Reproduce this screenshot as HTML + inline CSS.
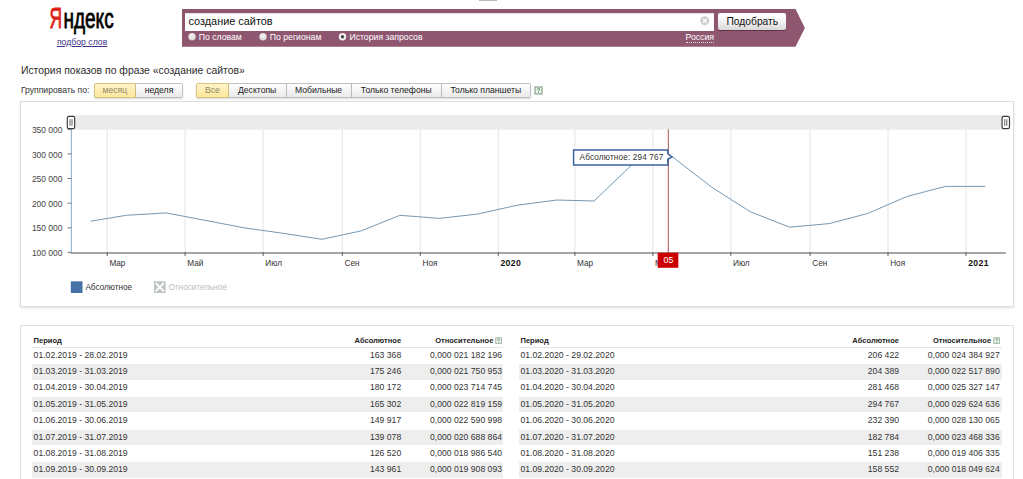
<!DOCTYPE html>
<html lang="ru"><head><meta charset="utf-8"><title>Яндекс — подбор слов</title>
<style>
html,body{margin:0;padding:0;background:#fff;}
body{width:1023px;height:479px;overflow:hidden;position:relative;font-family:"Liberation Sans",sans-serif;color:#222;}
.abs{position:absolute;white-space:nowrap;line-height:1;}
.ax{font-family:"Liberation Sans",sans-serif;font-size:8.2px;fill:#333;}
.ay{font-size:8.45px;fill:#444;}
.ax.b{font-weight:bold;fill:#111;font-size:8.7px;letter-spacing:0.35px;}
.axw{font-family:"Liberation Sans",sans-serif;}
.th{font-size:7.55px;font-weight:bold;color:#222;}
.td{font-size:8.65px;color:#333;}
.r{text-align:right;}
.box{border:1px solid #dedede;box-sizing:border-box;background:#fff;}
.help{width:6px;height:6px;border:1px solid #7fae84;box-sizing:border-box;background:#eef6ee;}
.help i{position:absolute;left:0;top:-0.4px;width:100%;text-align:center;font-style:normal;font-size:5px;line-height:5px;color:#3c8a46;font-weight:bold;}
.btn{position:absolute;box-sizing:border-box;top:83.1px;height:14.7px;border:1px solid #c2c2c2;border-left:none;background:linear-gradient(#ffffff,#e9e9e9);font-size:8.65px;line-height:13.2px;text-align:center;color:#222;white-space:nowrap;box-shadow:0 1px 1.5px rgba(0,0,0,.16);}
.btn.first{border-left:1px solid #c2c2c2;border-radius:2px 0 0 2px;}
.btn.last{border-radius:0 2px 2px 0;}
.btn.on{background:linear-gradient(#fff4c8,#fce79c);border-color:#d8c383;color:#8f8a66;}
.rl{font-size:8.7px;color:#fff;top:33.2px;}
</style></head><body>
<!-- top tiny bar -->
<div class="abs" style="left:479.3px;top:0;width:17.6px;height:1.2px;background:#b3bcbc"></div>

<!-- logo -->
<svg class="abs" id="logo" style="left:40px;top:0" width="90" height="40" viewBox="0 0 90 40"><g font-family="Liberation Sans, sans-serif" stroke-linejoin="round"><text transform="translate(9.6,27.7) scale(0.59,1)" font-size="29.6" fill="#df1f1a" stroke="#df1f1a" stroke-width="0.9">Я</text><text transform="translate(23.4,27.7) scale(0.69,1)" font-size="27.6" fill="#000" stroke="#000" stroke-width="0.8">ндекс</text></g></svg>
<div class="abs" id="sub" style="left:56.9px;top:38.2px;font-size:8.7px;color:#40308a;text-decoration:underline">подбор слов</div>

<!-- search arrow -->
<svg class="abs" style="left:182px;top:9px" width="624" height="39" viewBox="0 0 624 39"><path d="M0 0.1 H613.5 L622.9 18.9 L613.5 37.8 H0 Z" fill="#8f566f"/></svg>
<div class="abs" style="left:184.8px;top:12.6px;width:529px;height:18px;background:#fff;box-shadow:inset 0 1px 1px rgba(0,0,0,.12)"></div>
<div class="abs" id="q" style="left:188.5px;top:16.1px;font-size:10.9px;color:#111">создание сайтов</div>
<svg class="abs" style="left:699.7px;top:16.3px" width="10" height="10" viewBox="0 0 10 10"><circle cx="4.8" cy="4.8" r="4.5" fill="#cfcfcf"/><path d="M3 3 L6.6 6.6 M6.6 3 L3 6.6" stroke="#fff" stroke-width="1.3"/></svg>
<div class="abs" id="go" style="left:718.1px;top:13.2px;width:68.4px;height:17px;box-sizing:border-box;border:none;border-radius:2px;background:linear-gradient(#ffffff 20%,#d9d9d9);box-shadow:0 1px 0.5px rgba(40,10,25,.45);font-size:10.25px;line-height:17.6px;text-align:center;color:#111">Подобрать</div>

<div class="abs rl" id="r1" style="left:198.7px">По словам</div>
<div class="abs rl" id="r2" style="left:269.8px">По регионам</div>
<svg class="abs" style="left:182px;top:30px" width="200" height="14" viewBox="182 30 200 14"><defs><radialGradient id="rg" cx="50%" cy="40%" r="60%"><stop offset="0" stop-color="#f6f6f6"/><stop offset="1" stop-color="#d6d2d4"/></radialGradient></defs><circle cx="192" cy="36.8" r="3.75" fill="url(#rg)"/><circle cx="263" cy="36.8" r="3.75" fill="url(#rg)"/><circle cx="342.5" cy="36.7" r="3.75" fill="#f2eef0"/><circle cx="342.5" cy="36.7" r="1.7" fill="#4a4a4a"/></svg>
<div class="abs rl" id="r3" style="left:349.4px">История запросов</div>
<div class="abs rl" id="ru" style="left:685.5px;top:32.6px;border-bottom:1px dotted #e8d9e0;padding-bottom:1.2px">Россия</div>

<!-- title -->
<div class="abs" id="title" style="left:20.9px;top:66px;font-size:10.43px;color:#2e2e2e">История показов по фразе «создание сайтов»</div>
<div class="abs" id="grp" style="left:20.9px;top:85.6px;font-size:8.6px;color:#333">Группировать по:</div>

<div class="btn first on" id="b1" style="left:93.6px;width:42.4px">месяц</div>
<div class="btn last" id="b2" style="left:136px;width:47px">неделя</div>

<div class="btn first on" id="b3" style="left:196.3px;width:32.4px">Все</div>
<div class="btn" id="b4" style="left:228.7px;width:57.9px">Десктопы</div>
<div class="btn" id="b5" style="left:286.6px;width:65px">Мобильные</div>
<div class="btn" id="b6" style="left:351.6px;width:90.3px">Только телефоны</div>
<div class="btn last" id="b7" style="left:441.9px;width:88.8px">Только планшеты</div>
<svg class="abs" style="left:533.6px;top:85.6px" width="9" height="9" viewBox="0 0 9 9"><rect x="1" y="1" width="7" height="7" fill="#e9f5ea" stroke="#8fa392" stroke-width="1.2"/><path d="M3.3 3.6 Q3.3 2.5 4.5 2.5 Q5.7 2.5 5.7 3.5 Q5.7 4.2 4.5 4.8 V5.4 M4.5 6.2 V6.9" stroke="#4d8055" stroke-width="0.9" fill="none"/></svg>

<!-- chart box -->
<div class="abs box" style="left:20.1px;top:100.8px;width:993.8px;height:206.6px;box-shadow:0 1px 2.5px rgba(0,0,0,.12)"></div>
<svg class="abs" style="left:0;top:0" width="1023" height="479" viewBox="0 0 1023 479">
<rect x="71" y="115.2" width="935" height="14.5" fill="#ebebeb"/>
<line x1="107.2" y1="129.3" x2="107.2" y2="252.4" stroke="#dddde1" stroke-width="0.8"/>
<line x1="185.1" y1="129.3" x2="185.1" y2="252.4" stroke="#dddde1" stroke-width="0.8"/>
<line x1="263.1" y1="129.3" x2="263.1" y2="252.4" stroke="#dddde1" stroke-width="0.8"/>
<line x1="342.3" y1="129.3" x2="342.3" y2="252.4" stroke="#dddde1" stroke-width="0.8"/>
<line x1="420.3" y1="129.3" x2="420.3" y2="252.4" stroke="#dddde1" stroke-width="0.8"/>
<line x1="498.2" y1="129.3" x2="498.2" y2="252.4" stroke="#dddde1" stroke-width="0.8"/>
<line x1="574.9" y1="129.3" x2="574.9" y2="252.4" stroke="#dddde1" stroke-width="0.8"/>
<line x1="652.9" y1="129.3" x2="652.9" y2="252.4" stroke="#dddde1" stroke-width="0.8"/>
<line x1="730.8" y1="129.3" x2="730.8" y2="252.4" stroke="#dddde1" stroke-width="0.8"/>
<line x1="810.1" y1="129.3" x2="810.1" y2="252.4" stroke="#dddde1" stroke-width="0.8"/>
<line x1="888.0" y1="129.3" x2="888.0" y2="252.4" stroke="#dddde1" stroke-width="0.8"/>
<line x1="966.0" y1="129.3" x2="966.0" y2="252.4" stroke="#dddde1" stroke-width="0.8"/>
<line x1="71.4" y1="129" x2="71.4" y2="252.4" stroke="#98b6d2" stroke-width="1.15"/>
<line x1="67.5" y1="252.4" x2="71.4" y2="252.4" stroke="#777" stroke-width="1"/>
<text class="ax ay" x="62.4" y="256.0" text-anchor="end">100 000</text>
<line x1="67.5" y1="227.8" x2="71.4" y2="227.8" stroke="#777" stroke-width="1"/>
<text class="ax ay" x="62.4" y="231.4" text-anchor="end">150 000</text>
<line x1="67.5" y1="203.2" x2="71.4" y2="203.2" stroke="#777" stroke-width="1"/>
<text class="ax ay" x="62.4" y="206.8" text-anchor="end">200 000</text>
<line x1="67.5" y1="178.5" x2="71.4" y2="178.5" stroke="#777" stroke-width="1"/>
<text class="ax ay" x="62.4" y="182.1" text-anchor="end">250 000</text>
<line x1="67.5" y1="153.9" x2="71.4" y2="153.9" stroke="#777" stroke-width="1"/>
<text class="ax ay" x="62.4" y="157.5" text-anchor="end">300 000</text>
<line x1="67.5" y1="129.3" x2="71.4" y2="129.3" stroke="#777" stroke-width="1"/>
<text class="ax ay" x="62.4" y="132.9" text-anchor="end">350 000</text>
<line x1="70.7" y1="253.0" x2="1005.8" y2="253.0" stroke="#868686" stroke-width="1.7"/>
<line x1="107.2" y1="252.4" x2="107.2" y2="255.9" stroke="#555" stroke-width="1"/>
<text class="ax" x="109.4" y="266.3" text-anchor="start">Мар</text>
<line x1="185.1" y1="252.4" x2="185.1" y2="255.9" stroke="#555" stroke-width="1"/>
<text class="ax" x="187.3" y="266.3" text-anchor="start">Май</text>
<line x1="263.1" y1="252.4" x2="263.1" y2="255.9" stroke="#555" stroke-width="1"/>
<text class="ax" x="265.3" y="266.3" text-anchor="start">Июл</text>
<line x1="342.3" y1="252.4" x2="342.3" y2="255.9" stroke="#555" stroke-width="1"/>
<text class="ax" x="344.5" y="266.3" text-anchor="start">Сен</text>
<line x1="420.3" y1="252.4" x2="420.3" y2="255.9" stroke="#555" stroke-width="1"/>
<text class="ax" x="422.5" y="266.3" text-anchor="start">Ноя</text>
<line x1="498.2" y1="252.4" x2="498.2" y2="255.9" stroke="#555" stroke-width="1"/>
<text class="ax b" x="500.4" y="266.3" text-anchor="start">2020</text>
<line x1="574.9" y1="252.4" x2="574.9" y2="255.9" stroke="#555" stroke-width="1"/>
<text class="ax" x="577.1" y="266.3" text-anchor="start">Мар</text>
<line x1="652.9" y1="252.4" x2="652.9" y2="255.9" stroke="#555" stroke-width="1"/>
<text class="ax" x="655.1" y="266.3" text-anchor="start">Май</text>
<line x1="730.8" y1="252.4" x2="730.8" y2="255.9" stroke="#555" stroke-width="1"/>
<text class="ax" x="733.0" y="266.3" text-anchor="start">Июл</text>
<line x1="810.1" y1="252.4" x2="810.1" y2="255.9" stroke="#555" stroke-width="1"/>
<text class="ax" x="812.3" y="266.3" text-anchor="start">Сен</text>
<line x1="888.0" y1="252.4" x2="888.0" y2="255.9" stroke="#555" stroke-width="1"/>
<text class="ax" x="890.2" y="266.3" text-anchor="start">Ноя</text>
<line x1="966.0" y1="252.4" x2="966.0" y2="255.9" stroke="#555" stroke-width="1"/>
<text class="ax b" x="968.2" y="266.3" text-anchor="start">2021</text>
<polyline points="90.6,221.2 126.4,215.3 166.0,212.9 204.3,220.2 243.9,227.8 282.3,233.2 321.9,239.3 361.5,230.8 399.8,215.3 439.5,218.4 477.8,214.0 517.4,205.2 557.0,200.0 594.1,201.0 633.7,163.0 672.0,156.5 711.7,187.2 750.0,211.6 789.6,227.2 829.2,223.6 867.6,213.5 907.2,196.4 945.5,186.4 985.2,186.4" fill="none" stroke="#6f92ae" stroke-width="0.95"/>
<line x1="668.3" y1="129.3" x2="668.3" y2="253" stroke="#9a3236" stroke-width="0.85"/>
<rect x="657.7" y="252.7" width="20.6" height="15.1" fill="#cc0000"/>
<text x="668.5" y="263.0" text-anchor="middle" font-size="8.8" fill="#fff" class="axw">05</text>
<path d="M573.6 149.9 H667.8 V153.6 L672 156.8 L667.8 159.3 V165.0 H573.6 Z" fill="#fff" stroke="#3a63a0" stroke-width="1.5"/>
<text class="ax" x="579.6" y="160.1" fill="#222" style="letter-spacing:0.16px">Абсолютное: 294 767</text>
<rect x="67.3" y="116.3" width="7.4" height="12.3" rx="1.7" fill="#fff" stroke="#3a3a3a" stroke-width="1.15"/>
<line x1="70.0" y1="119.2" x2="70.0" y2="125.8" stroke="#333" stroke-width="0.75"/>
<line x1="72.0" y1="119.2" x2="72.0" y2="125.8" stroke="#333" stroke-width="0.75"/>
<rect x="1002.1" y="116.3" width="7.4" height="12.3" rx="1.7" fill="#fff" stroke="#3a3a3a" stroke-width="1.15"/>
<line x1="1004.8" y1="119.2" x2="1004.8" y2="125.8" stroke="#333" stroke-width="0.75"/>
<line x1="1006.8" y1="119.2" x2="1006.8" y2="125.8" stroke="#333" stroke-width="0.75"/>
<rect x="70.8" y="281.3" width="11.7" height="11.7" fill="#4572a7"/>
<text class="ax" x="85.4" y="290.2" fill="#222">Абсолютное</text>
<rect x="153.9" y="281.3" width="11.7" height="11.7" fill="#bdc3c3"/>
<path d="M155.6 283 L163.9 291.3 M163.9 283 L155.6 291.3" stroke="#fff" stroke-width="1.8" fill="none"/>
<text class="ax" x="168.5" y="290.2" fill="#bdbdbd" style="fill:#bdbdbd">Относительное</text>
</svg>

<!-- table box -->
<div class="abs box" style="left:20.1px;top:325px;width:993.8px;height:170px"></div>
<div class="abs th" style="left:33.6px;top:336.5px">Период</div>
<div class="abs th r" style="left:301.2px;width:100px;top:336.5px">Абсолютное</div>
<div class="abs th r" style="left:393.4px;width:100px;top:336.5px">Относительное</div>
<svg class="abs" style="left:495.0px;top:337.0px" width="7.2" height="7.2" viewBox="0 0 9 9"><rect x="1" y="1" width="7" height="7" fill="#edf7ee" stroke="#9fb3a2" stroke-width="1.2"/><path d="M3.3 3.6 Q3.3 2.5 4.5 2.5 Q5.7 2.5 5.7 3.5 Q5.7 4.2 4.5 4.8 V5.4 M4.5 6.2 V6.9" stroke="#4d8055" stroke-width="0.9" fill="none"/></svg>
<div class="abs" style="left:32.4px;top:346.5px;width:470.9px;height:1px;background:#e4e4e4"></div>
<div class="abs td" style="left:33.6px;top:350.7px">01.02.2019 - 28.02.2019</div>
<div class="abs td r" style="left:301.2px;width:100px;top:350.7px">163 368</div>
<div class="abs td r" style="left:402.0px;width:100px;top:350.7px">0,000 021 182 196</div>
<div class="abs" style="left:32.4px;top:364.0px;width:470.9px;height:15.5px;background:#eeeeee"></div>
<div class="abs td" style="left:33.6px;top:367.1px">01.03.2019 - 31.03.2019</div>
<div class="abs td r" style="left:301.2px;width:100px;top:367.1px">175 246</div>
<div class="abs td r" style="left:402.0px;width:100px;top:367.1px">0,000 021 750 953</div>
<div class="abs td" style="left:33.6px;top:383.4px">01.04.2019 - 30.04.2019</div>
<div class="abs td r" style="left:301.2px;width:100px;top:383.4px">180 172</div>
<div class="abs td r" style="left:402.0px;width:100px;top:383.4px">0,000 023 714 745</div>
<div class="abs" style="left:32.4px;top:396.7px;width:470.9px;height:15.5px;background:#eeeeee"></div>
<div class="abs td" style="left:33.6px;top:399.8px">01.05.2019 - 31.05.2019</div>
<div class="abs td r" style="left:301.2px;width:100px;top:399.8px">165 302</div>
<div class="abs td r" style="left:402.0px;width:100px;top:399.8px">0,000 022 819 159</div>
<div class="abs td" style="left:33.6px;top:416.2px">01.06.2019 - 30.06.2019</div>
<div class="abs td r" style="left:301.2px;width:100px;top:416.2px">149 917</div>
<div class="abs td r" style="left:402.0px;width:100px;top:416.2px">0,000 022 590 998</div>
<div class="abs" style="left:32.4px;top:429.5px;width:470.9px;height:15.5px;background:#eeeeee"></div>
<div class="abs td" style="left:33.6px;top:432.6px">01.07.2019 - 31.07.2019</div>
<div class="abs td r" style="left:301.2px;width:100px;top:432.6px">139 078</div>
<div class="abs td r" style="left:402.0px;width:100px;top:432.6px">0,000 020 688 864</div>
<div class="abs td" style="left:33.6px;top:448.9px">01.08.2019 - 31.08.2019</div>
<div class="abs td r" style="left:301.2px;width:100px;top:448.9px">126 520</div>
<div class="abs td r" style="left:402.0px;width:100px;top:448.9px">0,000 018 986 540</div>
<div class="abs" style="left:32.4px;top:462.2px;width:470.9px;height:15.5px;background:#eeeeee"></div>
<div class="abs td" style="left:33.6px;top:465.3px">01.09.2019 - 30.09.2019</div>
<div class="abs td r" style="left:301.2px;width:100px;top:465.3px">143 961</div>
<div class="abs td r" style="left:402.0px;width:100px;top:465.3px">0,000 019 908 093</div>
<div class="abs th" style="left:520.5px;top:336.5px">Период</div>
<div class="abs th r" style="left:799.0px;width:100px;top:336.5px">Абсолютное</div>
<div class="abs th r" style="left:891.1px;width:100px;top:336.5px">Относительное</div>
<svg class="abs" style="left:992.7px;top:337.0px" width="7.2" height="7.2" viewBox="0 0 9 9"><rect x="1" y="1" width="7" height="7" fill="#edf7ee" stroke="#9fb3a2" stroke-width="1.2"/><path d="M3.3 3.6 Q3.3 2.5 4.5 2.5 Q5.7 2.5 5.7 3.5 Q5.7 4.2 4.5 4.8 V5.4 M4.5 6.2 V6.9" stroke="#4d8055" stroke-width="0.9" fill="none"/></svg>
<div class="abs" style="left:519.3px;top:346.5px;width:482.4px;height:1px;background:#e4e4e4"></div>
<div class="abs td" style="left:520.5px;top:350.7px">01.02.2020 - 29.02.2020</div>
<div class="abs td r" style="left:799.0px;width:100px;top:350.7px">206 422</div>
<div class="abs td r" style="left:899.7px;width:100px;top:350.7px">0,000 024 384 927</div>
<div class="abs" style="left:519.3px;top:364.0px;width:482.4px;height:15.5px;background:#eeeeee"></div>
<div class="abs td" style="left:520.5px;top:367.1px">01.03.2020 - 31.03.2020</div>
<div class="abs td r" style="left:799.0px;width:100px;top:367.1px">204 389</div>
<div class="abs td r" style="left:899.7px;width:100px;top:367.1px">0,000 022 517 890</div>
<div class="abs td" style="left:520.5px;top:383.4px">01.04.2020 - 30.04.2020</div>
<div class="abs td r" style="left:799.0px;width:100px;top:383.4px">281 468</div>
<div class="abs td r" style="left:899.7px;width:100px;top:383.4px">0,000 025 327 147</div>
<div class="abs" style="left:519.3px;top:396.7px;width:482.4px;height:15.5px;background:#eeeeee"></div>
<div class="abs td" style="left:520.5px;top:399.8px">01.05.2020 - 31.05.2020</div>
<div class="abs td r" style="left:799.0px;width:100px;top:399.8px">294 767</div>
<div class="abs td r" style="left:899.7px;width:100px;top:399.8px">0,000 029 624 636</div>
<div class="abs td" style="left:520.5px;top:416.2px">01.06.2020 - 30.06.2020</div>
<div class="abs td r" style="left:799.0px;width:100px;top:416.2px">232 390</div>
<div class="abs td r" style="left:899.7px;width:100px;top:416.2px">0,000 028 130 065</div>
<div class="abs" style="left:519.3px;top:429.5px;width:482.4px;height:15.5px;background:#eeeeee"></div>
<div class="abs td" style="left:520.5px;top:432.6px">01.07.2020 - 31.07.2020</div>
<div class="abs td r" style="left:799.0px;width:100px;top:432.6px">182 784</div>
<div class="abs td r" style="left:899.7px;width:100px;top:432.6px">0,000 023 468 336</div>
<div class="abs td" style="left:520.5px;top:448.9px">01.08.2020 - 31.08.2020</div>
<div class="abs td r" style="left:799.0px;width:100px;top:448.9px">151 238</div>
<div class="abs td r" style="left:899.7px;width:100px;top:448.9px">0,000 019 406 335</div>
<div class="abs" style="left:519.3px;top:462.2px;width:482.4px;height:15.5px;background:#eeeeee"></div>
<div class="abs td" style="left:520.5px;top:465.3px">01.09.2020 - 30.09.2020</div>
<div class="abs td r" style="left:799.0px;width:100px;top:465.3px">158 552</div>
<div class="abs td r" style="left:899.7px;width:100px;top:465.3px">0,000 018 049 624</div>
</body></html>
